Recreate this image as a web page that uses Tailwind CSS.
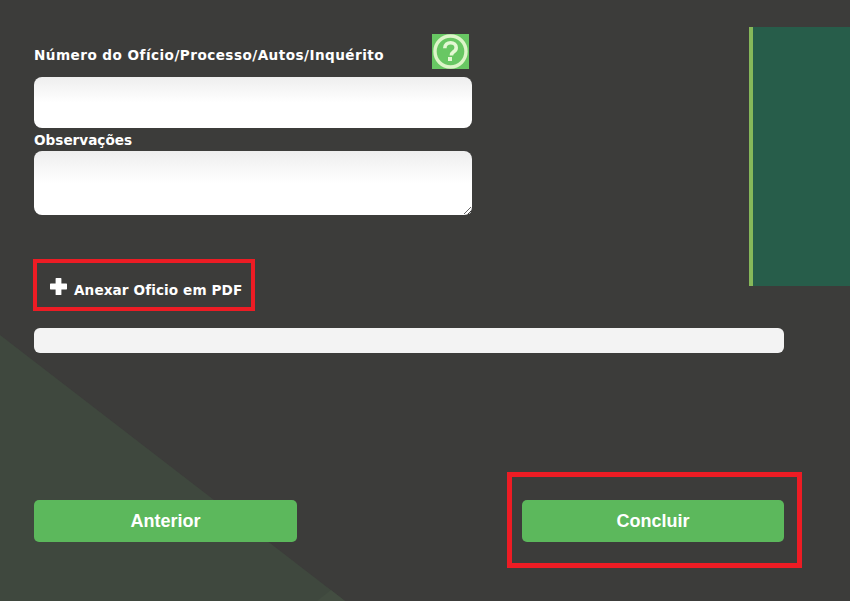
<!DOCTYPE html>
<html lang="pt">
<head>
<meta charset="utf-8">
<script src="https://cdn.jsdelivr.net/npm/@tailwindcss/browser@4"></script>
</head>
<body class="bg-[#3c3c3a]">
<div class="relative w-[850px] h-[601px] overflow-hidden bg-[#3c3c3a] font-['DejaVu_Sans',sans-serif] text-white">
  <div class="absolute inset-0 bg-[#3f483e] [clip-path:polygon(0_335px,345px_601px,0_601px)]"></div>
  <div class="absolute inset-0 bg-[#434d41] [clip-path:polygon(317px_601px,331px_590px,345px_601px)]"></div>
  <div class="absolute left-[749px] top-[27px] w-[101px] h-[259px] bg-[#275d4a] border-l-4 border-[#86b85a]"></div>

  <div class="relative pl-[34px] pt-[34px] w-[784px] flex flex-col">
    <div class="w-[438px] h-[35px] mb-2 flex items-center justify-between">
      <label class="text-[13.6px] tracking-[0.45px] font-bold leading-[16px] pt-[7px] whitespace-nowrap">Número do Ofício/Processo/Autos/Inquérito</label>
      <div class="w-[37px] h-[35px] mr-[3px] shrink-0 bg-[#68c763] flex items-center justify-center">
        <svg width="35" height="35" viewBox="0 0 35 35" fill="none">
          <circle cx="17.5" cy="17.5" r="15.5" stroke="#dcf5c8" stroke-width="3.4"/>
          <path d="M11.8 14.2c0-3.4 2.6-5.4 5.8-5.4s5.6 1.9 5.6 4.9c0 2.2-1.2 3.3-2.8 4.4-1.4 1-2 1.6-2 3.3" stroke="#e4f8d4" stroke-width="3.6"/>
          <rect x="15" y="23" width="4" height="4" fill="#e4f8d4"/>
        </svg>
      </div>
    </div>
    <input type="text" class="block w-[438px] h-[51px] rounded-lg bg-gradient-to-b from-[#eeeeee] to-white to-50% outline-none">
    <label class="block text-[13.6px] font-bold leading-[16px] mt-[4px] mb-[3px]">Observações</label>
    <textarea class="block w-[438px] h-[64px] rounded-lg bg-gradient-to-b from-[#eeeeee] to-white to-50% outline-none"></textarea>

    <div class="-ml-[1px] mt-[44px] w-[222px] h-[52px] border-4 border-[#ed1c24] flex items-center pt-[10px] pl-[13px] gap-[7px]">
      <svg width="17" height="17" viewBox="0 0 17 17" class="shrink-0 mb-[7px]"><path d="M6.2 0h4.6a.6.6 0 0 1 .6.6v5h5a.6.6 0 0 1 .6.6v4.6a.6.6 0 0 1-.6.6h-5v5a.6.6 0 0 1-.6.6H6.2a.6.6 0 0 1-.6-.6v-5h-5a.6.6 0 0 1-.6-.6V6.2a.6.6 0 0 1 .6-.6h5v-5a.6.6 0 0 1 .6-.6z" fill="#fff"/></svg>
      <span class="text-[13.6px] tracking-[0.1px] font-bold leading-[16px] whitespace-nowrap">Anexar Oficio em PDF</span>
    </div>

    <div class="mt-[17px] w-[750px] h-[25px] rounded-md bg-[#f3f3f3]"></div>

    <div class="mt-[147px] w-[750px] flex justify-between items-center font-['Liberation_Sans',sans-serif]">
      <button class="w-[263px] h-[42px] rounded-[5px] bg-[#5cb85c] text-lg font-bold text-white">Anterior</button>
      <button class="w-[262px] h-[42px] rounded-[5px] bg-[#5cb85c] text-lg font-bold text-white">Concluir</button>
    </div>
  </div>
  <div class="absolute left-[507px] top-[472px] w-[295px] h-[96px] border-[5px] border-[#ed1c24]"></div>
</div>
</body>
</html>
